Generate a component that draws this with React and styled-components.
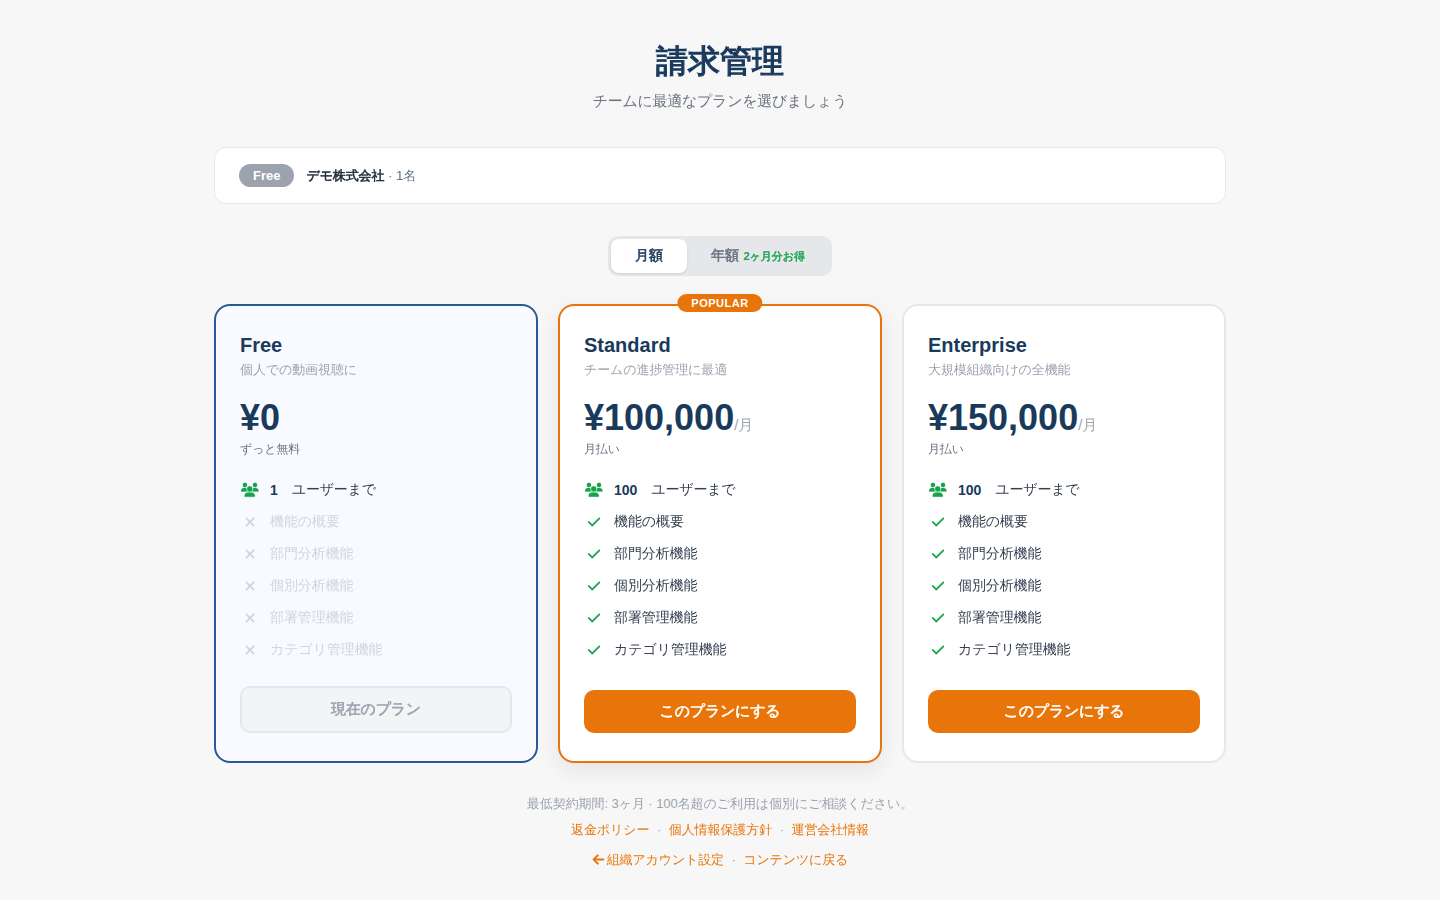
import React, { useState } from 'react';
import styled, { createGlobalStyle, css } from 'styled-components';
import { FaUsers, FaCheck, FaXmark, FaArrowLeft } from 'react-icons/fa6';

const GlobalStyle = createGlobalStyle`
    * {
        box-sizing: border-box;
    }

    body {
        margin: 0;
        background: #f7f7f7;
        color: #1f2937;
        font-family: 'Liberation Sans', 'WenQuanYi Zen Hei', 'Noto Sans CJK JP', sans-serif;
        line-height: 1.5;
    }

    svg {
        overflow: visible;
        stroke: currentColor;
        stroke-width: 8px;
    }
`;

// the Japanese face has a single weight, a thin stroke makes it bold
const heavy = css`
    font-weight: 700;
    -webkit-text-stroke: 0.04em currentColor;
`;

const FEATURES = [
    '機能の概要',
    '部門分析機能',
    '個別分析機能',
    '部署管理機能',
    'カテゴリ管理機能'
];

const PLANS = [
    {
        name: 'Free',
        description: '個人での動画視聴に',
        monthly: '0',
        yearly: '0',
        free: true,
        users: 1,
        current: true
    },
    {
        name: 'Standard',
        description: 'チームの進捗管理に最適',
        monthly: '100,000',
        yearly: '1,000,000',
        users: 100,
        popular: true
    },
    {
        name: 'Enterprise',
        description: '大規模組織向けの全機能',
        monthly: '150,000',
        yearly: '1,500,000',
        users: 100
    }
];

const PlanCard = ({ plan, yearly }) => {
    const { name, description, free, users, current, popular } = plan;

    return (
        <Card $current={ current } $popular={ popular }>
            { popular && <Popular>POPULAR</Popular> }
            <PlanName>{ name }</PlanName>
            <Description>{ description }</Description>
            <Price>
                ¥{ yearly ? plan.yearly : plan.monthly }
                { !free && <Unit>{ yearly ? '/年' : '/月' }</Unit> }
            </Price>
            <Billing>{ free ? 'ずっと無料' : yearly ? '年払い' : '月払い' }</Billing>

            <Features>
                <Feature>
                    <IconSlot><FaUsers size={ 17.5 } /></IconSlot>
                    <strong>{ users }</strong>
                    <FeatureText>ユーザーまで</FeatureText>
                </Feature>
                { FEATURES.map(feature => (
                    <Feature key={ feature } $disabled={ free }>
                        <IconSlot $disabled={ free }>{ free ? <FaXmark size={ 14 } /> : <FaCheck size={ 14 } /> }</IconSlot>
                        <FeatureText>{ feature }</FeatureText>
                    </Feature>
                )) }
            </Features>

            <PlanButton $current={ current } disabled={ current }>
                { current ? '現在のプラン' : 'このプランにする' }
            </PlanButton>
        </Card>
    );
};

const App = () => {
    const [yearly, setYearly] = useState(false);

    return (
        <Page>
            <GlobalStyle />
            <Header>
                <Title>請求管理</Title>
                <Lead>チームに最適なプランを選びましょう</Lead>
            </Header>

            <Organization>
                <Badge>Free</Badge>
                <p><strong>デモ株式会社</strong> · 1名</p>
            </Organization>

            <Toggle>
                <ToggleButton $active={ !yearly } onClick={ () => setYearly(false) }>月額</ToggleButton>
                <ToggleButton $active={ yearly } onClick={ () => setYearly(true) }>
                    年額 <Saving>2<b>ヶ月分お得</b></Saving>
                </ToggleButton>
            </Toggle>

            <Plans>
                { PLANS.map(plan => <PlanCard key={ plan.name } plan={ plan } yearly={ yearly } />) }
            </Plans>

            <Footer>
                <p>最低契約期間: 3ヶ月 · 100名超のご利用は個別にご相談ください。</p>
                <Links>
                    <a href="#refund">返金ポリシー</a>
                    <span>·</span>
                    <a href="#privacy">個人情報保護方針</a>
                    <span>·</span>
                    <a href="#company">運営会社情報</a>
                </Links>
                <Links $spaced>
                    <a href="#account"><FaArrowLeft size={ 13 } />組織アカウント設定</a>
                    <span>·</span>
                    <a href="#contents">コンテンツに戻る</a>
                </Links>
            </Footer>
        </Page>
    );
};

const Page = styled.main`
    width: 1012px;
    margin: 0 auto;
    padding-top: 37px;
`;

const Header = styled.header`
    text-align: center;
`;

const Title = styled.h1`
    margin: 0 0 4px;
    font-size: 32px;
    line-height: 48px;
    color: #1a3a5c;
    ${heavy}
`;

const Lead = styled.p`
    margin: 0;
    font-size: 15px;
    line-height: 24px;
    letter-spacing: -0.3px;
    color: #6b7280;
`;

const Organization = styled.section`
    display: flex;
    align-items: center;
    gap: 12px;
    height: 57px;
    margin: 34px 0 32px;
    padding: 0 24px;
    background: #fff;
    border: 1px solid #e5e7eb;
    border-radius: 12px;
    font-size: 13px;
    color: #6b7280;

    p {
        margin: 0;
    }

    strong {
        letter-spacing: -0.12px;
        color: #1f2937;
        ${heavy}
    }
`;

const Badge = styled.span`
    padding: 4px 14px;
    background: #9ca3af;
    border-radius: 20px;
    color: #fff;
    font-weight: 700;
    line-height: 15px;
`;

const Toggle = styled.div`
    display: flex;
    width: 224px;
    height: 40px;
    margin: 0 auto 28px;
    padding: 3px;
    background: #e5e7eb;
    border-radius: 10px;
`;

const ToggleButton = styled.button`
    padding: 0 24px;
    border: none;
    border-radius: 8px;
    background: ${props => props.$active ? '#fff' : 'transparent'};
    box-shadow: ${props => props.$active ? '0 1px 3px rgba(0, 0, 0, 0.1)' : 'none'};
    color: ${props => props.$active ? '#1a3a5c' : '#6b7280'};
    font-family: inherit;
    font-size: 14px;
    white-space: nowrap;
    cursor: pointer;
    ${heavy}
`;

const Saving = styled.span`
    margin-left: 0.5px;
    font-size: 11px;
    color: #16a34a;
    -webkit-text-stroke: 0;

    b {
        ${heavy}
    }
`;

const Plans = styled.section`
    display: grid;
    grid-template-columns: repeat(3, 1fr);
    gap: 20px;
`;

const Card = styled.article`
    position: relative;
    display: flex;
    flex-direction: column;
    height: 459px;
    padding: 26px 24px 28px;
    background: ${props => props.$current ? '#f8faff' : '#fff'};
    border: 2px solid ${props => props.$current ? '#2a5a94' : props.$popular ? '#e8750a' : '#e5e7eb'};
    border-radius: 16px;
    box-shadow: ${props => props.$popular ? '0 8px 24px rgba(0, 0, 0, 0.08)' : 'none'};
`;

const Popular = styled.span`
    position: absolute;
    top: -12px;
    left: 50%;
    transform: translateX(-50%);
    padding: 3px 14px;
    background: #e8750a;
    border-radius: 20px;
    color: #fff;
    font-size: 11px;
    font-weight: 700;
    line-height: 12px;
    letter-spacing: 0.5px;
`;

const PlanName = styled.h2`
    margin: 0;
    font-size: 20px;
    line-height: 26px;
    color: #1a3a5c;
`;

const Description = styled.p`
    margin: 2px 0 16px;
    font-size: 13px;
    line-height: 20px;
    letter-spacing: -0.1px;
    color: #9ca3af;
`;

const Price = styled.div`
    height: 44px;
    font-size: 36px;
    font-weight: 800;
    line-height: 44px;
    color: #1a3a5c;
`;

const Unit = styled.span`
    font-size: 15px;
    font-weight: 400;
    color: #9ca3af;
`;

const Billing = styled.p`
    margin: 0 0 16px;
    font-size: 12px;
    line-height: 18px;
    letter-spacing: -0.15px;
    color: #6b7280;
`;

const Features = styled.ul`
    margin: 0;
    padding: 0;
    list-style: none;
`;

const Feature = styled.li`
    display: flex;
    align-items: center;
    gap: 10px;
    height: 32px;
    font-size: 14px;
    color: ${props => props.$disabled ? '#d1d5db' : '#374151'};

    strong {
        color: #1a3a5c;
    }

    strong + span {
        margin-left: 4px;
        letter-spacing: -0.2px;
    }
`;

const FeatureText = styled.span`
    padding-bottom: 2px;
    letter-spacing: -0.1px;
`;

const IconSlot = styled.span`
    display: flex;
    justify-content: center;
    width: 20px;
    color: ${props => props.$disabled ? '#d1d5db' : '#16a34a'};
`;

const PlanButton = styled.button`
    width: 100%;
    height: ${props => props.$current ? '47px' : '43px'};
    margin-top: auto;
    border: ${props => props.$current ? '2px solid #e5e7eb' : 'none'};
    border-radius: 10px;
    background: ${props => props.$current ? '#f3f4f6' : '#e8750a'};
    color: ${props => props.$current ? '#9ca3af' : '#fff'};
    font-family: inherit;
    font-size: 15px;
    letter-spacing: -0.25px;
    cursor: ${props => props.$current ? 'default' : 'pointer'};
    ${heavy}
`;

const Footer = styled.footer`
    margin-top: 31px;
    text-align: center;
    font-size: 13px;
    line-height: 20px;
    color: #9ca3af;

    p {
        margin: 0;
        letter-spacing: -0.07px;
    }
`;

const Links = styled.nav`
    display: flex;
    justify-content: center;
    gap: 7.5px;
    margin-top: ${props => props.$spaced ? '10px' : '6px'};

    a {
        color: #e8750a;
        letter-spacing: ${props => props.$spaced ? '-0.15px' : '-0.08px'};
        text-decoration: none;
    }

    svg {
        margin-right: 2px;
        stroke-width: 16px;
        vertical-align: -2px;
    }
`;

export default App;
